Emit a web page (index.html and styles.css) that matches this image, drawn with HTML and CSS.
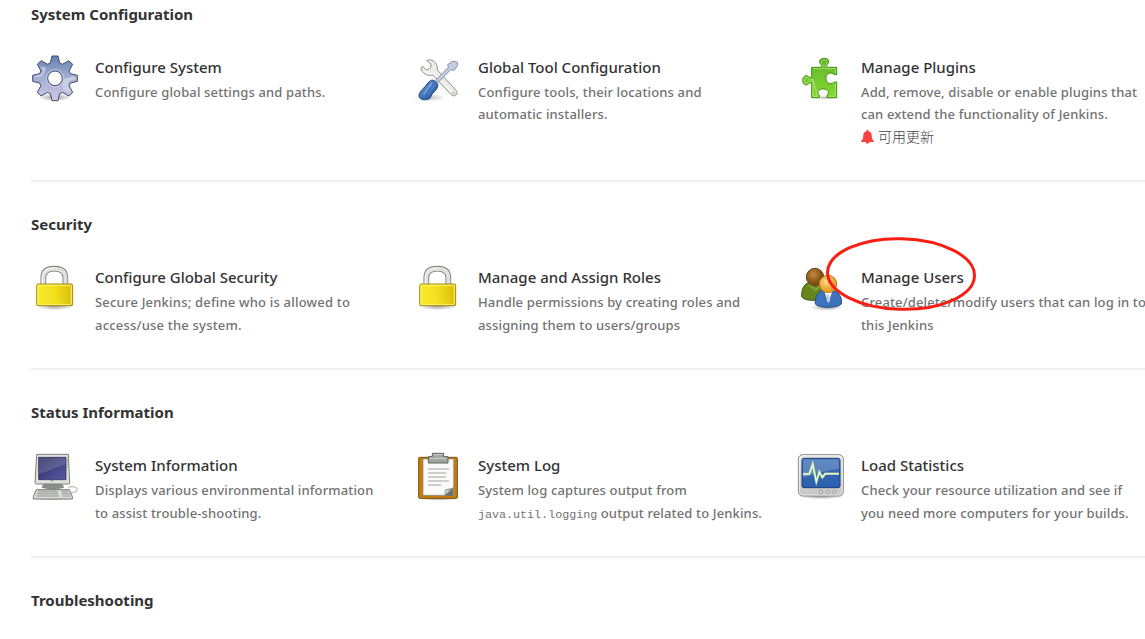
FILE: index.html
```html
<!DOCTYPE html>
<html lang="en">
<head>
<meta charset="utf-8">
<title>Manage Jenkins</title>
<link rel="stylesheet" href="styles.css">
</head>
<body>
<svg class="defs" width="0" height="0">
  <defs>
    <linearGradient id="gear" x1="0" y1="0" x2="0" y2="1"><stop offset="0" stop-color="#6480ad"/><stop offset=".45" stop-color="#9faccf"/><stop offset="1" stop-color="#d2c6e2"/></linearGradient>
    <linearGradient id="blue" x1="0" y1="0" x2="1" y2="1"><stop offset="0" stop-color="#6b9ade"/><stop offset="1" stop-color="#1d4d96"/></linearGradient>
    <linearGradient id="green" x1="0" y1="0" x2="0" y2="1"><stop offset="0" stop-color="#63b52a"/><stop offset="1" stop-color="#86d82f"/></linearGradient>
    <linearGradient id="gold" x1="0" y1="0" x2="1" y2="0"><stop offset="0" stop-color="#f7ea2c"/><stop offset=".5" stop-color="#f2e01c"/><stop offset="1" stop-color="#d8bd0c"/></linearGradient>
    <linearGradient id="screen" x1="0" y1="0" x2="1" y2="1"><stop offset="0" stop-color="#26265f"/><stop offset="1" stop-color="#5c5ca6"/></linearGradient>
    <linearGradient id="monitor" x1="0" y1="0" x2="0" y2="1"><stop offset="0" stop-color="#3a6bb0"/><stop offset="1" stop-color="#2c5fae"/></linearGradient>
    <linearGradient id="case" x1="0" y1="0" x2="0" y2="1"><stop offset="0" stop-color="#e6e6e3"/><stop offset="1" stop-color="#c6c7c4"/></linearGradient>
    <radialGradient id="brown" cx=".4" cy=".35"><stop offset="0" stop-color="#c58c40"/><stop offset="1" stop-color="#7d4f12"/></radialGradient>
    <radialGradient id="orange" cx=".4" cy=".35"><stop offset="0" stop-color="#ffd98a"/><stop offset="1" stop-color="#e9a02e"/></radialGradient>
    <radialGradient id="shade"><stop offset="0" stop-color="#000" stop-opacity=".4"/><stop offset="1" stop-color="#000" stop-opacity="0"/></radialGradient>
    <symbol id="lock" viewBox="33 27 144 144">
      <ellipse cx="104" cy="153" rx="58" ry="13" fill="url(#shade)"/>
      <path d="M70 92V68C70 48 84 41 103 41S136 48 136 68V92" fill="none" stroke="#777a76" stroke-width="17"/>
      <path d="M70 92V68C70 48 84 41 103 41S136 48 136 68V92" fill="none" stroke="#dfe1de" stroke-width="12"/>
      <path d="M67 88V68C68 47 84 39 104 39" fill="none" stroke="#fafafa" stroke-width="3"/>
      <rect x="50" y="87" width="108" height="65" rx="5" fill="url(#gold)" stroke="#a38a0c" stroke-width="3"/>
      <rect x="54" y="91" width="100" height="57" rx="2" fill="none" stroke="#fbf37a" stroke-width="3"/>
    </symbol>
  </defs>
</svg>

<main class="manage">
  <section class="section">
    <h2 class="heading">System Configuration</h2>
    <div class="items">
      <a class="item">
        <svg class="icon" viewBox="33 27 144 144">
          <ellipse cx="105" cy="157" rx="50" ry="12" fill="url(#shade)"/>
          <path transform="translate(105 100)" fill="url(#gear)" fill-rule="evenodd" stroke="#3f4a70" stroke-width="3" stroke-linejoin="round" d="M-14-46L-9-67H9L14-46L22.600-42.400L41.700-53L53-41.700L42.400-22.600L46-14L67-9V9L46 14L42.400 22.600L53 41.700L41.700 53L22.600 42.400L14 46L9 67H-9L-14 46L-22.600 42.400L-41.700 53L-53 41.700L-42.400 22.600L-46 14L-67 9V-9L-46-14L-42.400-22.600L-53-41.700L-41.700-53L-22.600-42.400ZM22 0A22 22 0 1 0-22 0A22 22 0 1 0 22 0Z"/>
          <path d="M61 64l18 5-8 18-6 8-22 2 1-5 20-4 4-11zM133 102l26-8 9 2v7l-20 5-5 13 10 15-7 7-16-9-4-12z" fill="#d6dced" opacity=".65"/>
          <circle cx="105" cy="100" r="26" fill="none" stroke="#dfe2f1" stroke-width="3" opacity=".6"/>
        </svg>
        <span class="text"><span class="title">Configure System</span><span class="desc">Configure global settings and paths.</span></span>
      </a>
      <a class="item">
        <svg class="icon" viewBox="27 27 144 144">
          <ellipse cx="74" cy="158" rx="48" ry="12" fill="url(#shade)" opacity=".6"/>
          <path d="M65 46C79 41 93 50 96 63L98 76L154 137C160 145 151 157 141 151L83 90C66 94 50 84 48 70L51 64L65 75L77 68L78 57Z" fill="#ecedeb" stroke="#8d908c" stroke-width="3" stroke-linejoin="round"/>
          <path d="M57 76C64 87 78 88 87 84L142 145" fill="none" stroke="#fff" stroke-width="3"/>
          <circle cx="146" cy="144" r="3.500" fill="#fff" stroke="#969995" stroke-width="2"/>
          <path d="M93 105L130 67L128 59L144 48L157 52L158 61L147 76L137 74L100 112Z" fill="#c3cddd" stroke="#8290a8" stroke-width="3" stroke-linejoin="round"/>
          <path d="M76 107C86 101 101 113 98 125C95 137 80 143 76 158C69 168 42 166 42 153C42 138 60 128 66 117Z" fill="url(#blue)" stroke="#204983" stroke-width="3"/>
          <path d="M80 115L57 147" stroke="#91b6ea" stroke-width="5" stroke-linecap="round" opacity=".7"/>
          <path d="M90 119L68 150" stroke="#7ba3de" stroke-width="3" stroke-linecap="round" opacity=".6"/>
        </svg>
        <span class="text"><span class="title">Global Tool Configuration</span><span class="desc">Configure tools, their locations and<br>automatic installers.</span></span>
      </a>
      <a class="item">
        <svg class="icon" viewBox="21 27 144 144">
          <ellipse cx="106" cy="158" rx="46" ry="6" fill="url(#shade)" opacity=".7"/>
          <path d="M65 67H95C98 60 88 57 89 48C90 37 115 37 116 48C117 57 107 60 110 67H140V89C132 91 129 84 122 84C103 84 103 116 122 116C129 116 132 109 140 111V158H111C108 151 117 147 115 140C111 129 87 129 84 140C83 148 91 151 88 158H65V113C57 111 55 121 47 120C35 117 35 95 47 92C55 91 57 100 65 98Z" fill="url(#green)" stroke="#3e9215" stroke-width="3"/>
          <path d="M69 71H98C103 61 92 56 94 49C97 43 109 43 112 49C113 56 103 61 107 71H136V84M136 116V154H117M83 154H69V108C58 105 55 116 48 115C40 113 40 99 48 97C56 96 58 106 69 103Z" fill="none" stroke="#b2e878" stroke-width="2.500"/>
        </svg>
        <span class="text"><span class="title">Manage Plugins</span><span class="desc">Add, remove, disable or enable plugins that<br>can extend the functionality of Jenkins.<br><span class="update"><svg class="bell" viewBox="0 0 13 14"><path d="M6.500 0C7.300 0 7.600.5 7.600 1.200C10 1.800 10.700 3.500 10.700 5.500C10.700 8 11.300 9.500 12.800 11V12H.2V11C1.700 9.500 2.300 8 2.300 5.500C2.300 3.500 3 1.800 5.400 1.200C5.400.5 5.700 0 6.500 0ZM4.700 12H8.300C8.300 14.300 4.700 14.300 4.700 12Z" fill="#ff4040"/></svg>可用更新</span></span></span>
      </a>
    </div>
  </section>

  <section class="section">
    <h2 class="heading">Security</h2>
    <div class="items">
      <a class="item">
        <svg class="icon"><use href="#lock"/></svg>
        <span class="text"><span class="title">Configure Global Security</span><span class="desc wide">Secure Jenkins; define who is allowed to<br>access/use the system.</span></span>
      </a>
      <a class="item">
        <svg class="icon"><use href="#lock"/></svg>
        <span class="text"><span class="title">Manage and Assign Roles</span><span class="desc">Handle permissions by creating roles and<br>assigning them to users/groups</span></span>
      </a>
      <a class="item">
        <svg class="icon" viewBox="51 102 144 144">
          <ellipse cx="140" cy="232" rx="48" ry="10" fill="url(#shade)"/>
          <path d="M84 158C68 166 64 184 65 200C72 211 101 214 124 208L130 166Z" fill="#66851d" stroke="#3f5710" stroke-width="3"/>
          <path d="M88 164l18 17 17-17" fill="none" stroke="#8ba63e" stroke-width="5"/>
          <circle cx="105" cy="141" r="26" fill="url(#brown)" stroke="#6c4515" stroke-width="3"/>
          <path d="M124 183C109 190 104 209 106 222C116 235 174 235 184 222C186 206 181 190 164 183Z" fill="#3e73bd" stroke="#1e4c8e" stroke-width="3"/>
          <path d="M134 186L145 219L156 186Z" fill="#fff"/>
          <path d="M142 193h6l2 18-5 8-5-8z" fill="#bfd1ed"/>
          <circle cx="144" cy="162" r="26" fill="url(#orange)" stroke="#b9781e" stroke-width="3"/>
        </svg>
        <span class="text"><span class="title">Manage Users</span><span class="desc">Create/delete/modify users that can log in to<br>this Jenkins</span></span>
        <svg class="marker" viewBox="0 0 152 78"><ellipse cx="76" cy="39" rx="73.500" ry="35.300" transform="rotate(1.500 76 39)" fill="none" stroke="#f81e12" stroke-width="3"/></svg>
      </a>
    </div>
  </section>

  <section class="section">
    <h2 class="heading">Status Information</h2>
    <div class="items">
      <a class="item">
        <svg class="icon" viewBox="33 21 144 144">
          <ellipse cx="98" cy="160" rx="64" ry="7" fill="url(#shade)"/>
          <path d="M145 127C158 121 174 128 171 136C169 142 160 143 154 143" fill="none" stroke="#c4c5c2" stroke-width="4"/>
          <path d="M73 115H124L131 127Q98 137 66 127Z" fill="#8b8e89" stroke="#666965" stroke-width="2"/>
          <path d="M50 28H145L149 114Q149 117 145 117H49Q45 117 45 114Z" fill="#e0e1dc" stroke="#7d807b" stroke-width="3"/>
          <path d="M56 37H138V104H56Z" fill="url(#screen)" stroke="#1e204d" stroke-width="2"/>
          <path d="M57 38H137V58C106 66 85 82 57 86Z" fill="#fff" opacity=".16"/>
          <path d="M142 44v3M142 51v3M142 58v3M142 65v3" stroke="#8c8f8a" stroke-width="3"/>
          <path d="M93 107h7" stroke="#666" stroke-width="2"/>
          <path d="M49 134H148L157 155V162H40V155Z" fill="#dcddd9" stroke="#767974" stroke-width="3"/>
          <path d="M54 139H113M51 146H115M49 153H118M123 139H145M125 146H149M127 153H151" stroke="#a9aca6" stroke-width="5"/>
        </svg>
        <span class="text"><span class="title">System Information</span><span class="desc">Displays various environmental information<br>to assist trouble-shooting.</span></span>
      </a>
      <a class="item">
        <svg class="icon" viewBox="27 21 144 144">
          <ellipse cx="99" cy="161" rx="62" ry="6" fill="url(#shade)"/>
          <rect x="41" y="37" width="116" height="123" rx="3" fill="#c17d11" stroke="#7b500a" stroke-width="3"/>
          <path d="M54 42H146V151H54Z" fill="#fafafa" stroke="#888b86" stroke-width="2"/>
          <path d="M119 152L121 134L145 128V152Z" fill="#6e716c"/>
          <path d="M119 151L121 134Q137 137 145 128Z" fill="#d0d2ce" stroke="#969994" stroke-width="2"/>
          <path d="M69 72H132M69 84H125M69 96H123M69 108H132M69 120H108" stroke="#bfc1be" stroke-width="5"/>
          <path d="M82 35V25H116V35H129V54H70V35Z" fill="#a1a69c" stroke="#5f635d" stroke-width="3"/>
          <path d="M74 40H125M86 29H112" stroke="#d2d5cf" stroke-width="3"/>
        </svg>
        <span class="text"><span class="title">System Log</span><span class="desc">System log captures output from<br><code class="code">java.util.logging</code> output related to Jenkins.</span></span>
      </a>
      <a class="item">
        <svg class="icon" viewBox="21 21 144 144">
          <ellipse cx="93" cy="154" rx="67" ry="9" fill="url(#shade)"/>
          <rect x="25" y="29" width="135" height="124" rx="13" fill="url(#case)" stroke="#888b87" stroke-width="3"/>
          <rect x="28" y="32" width="129" height="118" rx="11" fill="none" stroke="#f8f8f6" stroke-width="2"/>
          <rect x="36" y="40" width="114" height="88" rx="6" fill="url(#monitor)" stroke="#173c78" stroke-width="3"/>
          <path d="M39 43H147V71Q94 78 39 98Z" fill="#fff" opacity=".2"/>
          <path d="M39 87H58L68 58L79 110L88 81L97 97L106 86H147" fill="none" stroke="#b5df9c" stroke-width="8" opacity=".55"/>
          <path d="M39 87H58L68 58L79 110L88 81L97 97L106 86H147" fill="none" stroke="#f0ffcf" stroke-width="4.500"/>
          <g fill="#e5e6e3" stroke="#969994" stroke-width="3"><circle cx="93" cy="141" r="5"/><circle cx="113" cy="141" r="5"/><circle cx="133" cy="141" r="5"/></g>
        </svg>
        <span class="text"><span class="title">Load Statistics</span><span class="desc">Check your resource utilization and see if<br>you need more computers for your builds.</span></span>
      </a>
    </div>
  </section>

  <section class="section">
    <h2 class="heading">Troubleshooting</h2>
  </section>
</main>
</body>
</html>
```
FILE: styles.css
```css
* { box-sizing: border-box; }
html, body { margin: 0; height: 639px; overflow: hidden; background: #fff; }
body { font-family: "Noto Sans", "Noto Sans CJK SC", sans-serif; color: #333; }
.defs { position: absolute; }
.manage { margin-top: -28.5px; padding-left: 31px; height: 667px; overflow: hidden; }
.section { padding: 30px 0 32px; border-bottom: 2px solid #f0f0f0; }
.section:last-child { padding-bottom: 0; border: 0; }
.heading { margin: 0 0 30px; font-size: 15px; font-weight: 700; line-height: 24px; }
.section:last-child .heading { margin: 0; }
.items { display: grid; grid-template-columns: repeat(3, 383px); }
.item { display: flex; gap: 16px; position: relative; }
.icon { flex: none; width: 48px; height: 48px; margin-top: -2px; }
.text { display: flex; flex-direction: column; margin-top: -1px; white-space: nowrap; }
.title { padding-bottom: 1px; font-size: 15px; font-weight: 500; line-height: 25px; }
.desc { font-size: 13px; font-weight: 500; line-height: 22.5px; letter-spacing: .14px; color: #727272; }
.desc.wide { letter-spacing: .2px; }
.update { display: flex; align-items: center; gap: 4px; height: 22.5px; font-family: "Noto Sans CJK SC", sans-serif; font-size: 14px; font-weight: 300; line-height: 21px; letter-spacing: 0; color: #444; }
.bell { width: 13px; height: 14px; }
.code { font-family: "Liberation Mono", monospace; font-size: 11.7px; font-weight: 400; line-height: 1; letter-spacing: 0; }
.marker { position: absolute; left: 28px; top: -31px; width: 152px; height: 78px; }
```
